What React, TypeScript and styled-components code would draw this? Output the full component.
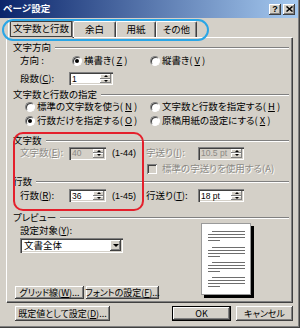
import React from "react";
import styled, { createGlobalStyle, css } from "styled-components";

const GlobalStyle = createGlobalStyle`
  html, body { margin: 0; padding: 0; background: #fff; }
  body {
    font-family: "Noto Sans CJK JP", "Noto Sans", sans-serif;
    font-size: 9.5px;
    line-height: 1;
    color: #000;
    font-feature-settings: "palt";
  }
  * { box-sizing: border-box; }
  u { text-decoration-thickness: 1px; text-underline-offset: 1px; }
`;

const Window = styled.div`
  position: relative;
  width: 300px;
  height: 328px;
  background: #d4d0c8;
  display: flex;
  flex-direction: column;
  box-shadow: inset -1px -1px #404040, inset -2px -2px #808080;
`;

const TitleBar = styled.div`
  height: 18px;
  margin-right: 2px;
  padding: 0 3px 0 3px;
  background: linear-gradient(to right, #0a246a, #a6caf0);
  display: flex;
  align-items: center;
  justify-content: space-between;
`;

const Title = styled.span`
  color: #fff;
  font-weight: bold;
  font-size: 9.5px;
  font-feature-settings: normal;
`;

const CaptionButtons = styled.div`
  display: flex;
  gap: 2px;
`;

const CaptionButton = styled.span`
  width: 12px;
  height: 11px;
  background: #d4d0c8;
  box-shadow: inset -1px -1px #404040, inset 1px 1px #fff, inset -2px -2px #808080;
  display: flex;
  align-items: center;
  justify-content: center;
  font: bold 9px "Liberation Sans", sans-serif;
`;

const TabStrip = styled.div`
  height: 19px;
  padding-left: 8px;
  display: flex;
  align-items: flex-end;
  position: relative;
  z-index: 1;
`;

const Tab = styled.div<{ $active?: boolean; $w: number }>`
  width: ${(p) => p.$w}px;
  height: 16px;
  background: #d4d0c8;
  border-top: 1px solid #fff;
  border-left: 1px solid #fff;
  border-right: 1px solid #404040;
  box-shadow: inset -1px 0 #808080;
  border-radius: 2px 2px 0 0;
  display: flex;
  align-items: center;
  justify-content: center;
  padding-top: 1px;
  ${(p) =>
    p.$active &&
    css`
      height: 19px;
      margin-bottom: -1px;
      margin-right: -1px;
      padding-top: 0;
    `}
`;

const Focus = styled.span`
  padding: 2px 2px;
  border: 1px solid #404040;
`;

const Panel = styled.div`
  position: relative;
  margin-left: 6px;
  width: 286px;
  height: 265px;
  border-top: 1px solid #fff;
  border-left: 1px solid #fff;
  box-shadow: 1px 1px #404040, inset -1px -1px #808080;
  padding: 4px 3px 0 6px;
  display: flex;
  flex-direction: column;
`;

const GroupHeader = styled.div<{ $mt: number }>`
  height: 11px;
  margin-top: ${(p) => p.$mt}px;
  display: flex;
  align-items: center;
  &::after {
    content: "";
    flex: 1;
    margin-left: 4px;
    border-top: 1px solid #808080;
    border-bottom: 1px solid #fff;
  }
`;

const Row = styled.div<{ $mt: number; $pl: number; $h?: number }>`
  height: ${(p) => p.$h ?? 12}px;
  margin-top: ${(p) => p.$mt}px;
  padding-left: ${(p) => p.$pl}px;
  display: flex;
  align-items: center;
`;

const Label = styled.span<{ $w?: number; $off?: boolean }>`
  width: ${(p) => (p.$w ? `${p.$w}px` : "auto")};
  flex: none;
  white-space: nowrap;
  ${(p) =>
    p.$off &&
    css`
      color: #8c8a85;
      text-shadow: 1px 1px #fff;
    `}
`;

const Option = styled.span<{ $w?: number }>`
  width: ${(p) => (p.$w ? `${p.$w}px` : "auto")};
  display: flex;
  align-items: center;
  gap: 2px;
  white-space: nowrap;
`;

const Radio = styled.span<{ $checked?: boolean }>`
  position: relative;
  width: 10px;
  height: 10px;
  flex: none;
  border-radius: 50%;
  background: #fff;
  border: 1px solid;
  border-color: #808080 #fff #fff #808080;
  box-shadow: inset 1px 1px #404040;
  ${(p) =>
    p.$checked &&
    css`
      &::after {
        content: "";
        position: absolute;
        left: 2px;
        top: 2px;
        width: 4px;
        height: 4px;
        border-radius: 50%;
        background: #000;
      }
    `}
`;

const Checkbox = styled.span`
  width: 10px;
  height: 10px;
  flex: none;
  background: #d4d0c8;
  box-shadow: inset 1px 1px #808080, inset -1px -1px #fff, inset 2px 2px #404040;
  margin-right: 5px;
`;

const SpinBox = styled.div<{ $w: number; $off?: boolean }>`
  width: ${(p) => p.$w}px;
  height: 13px;
  flex: none;
  padding: 2px;
  display: flex;
  align-items: center;
  background: ${(p) => (p.$off ? "#d4d0c8" : "#fff")};
  color: ${(p) => (p.$off ? "#8c8a85" : "#000")};
  box-shadow: inset 1px 1px #808080, inset 2px 2px #404040, inset -1px -1px #fff, inset -2px -2px #d4d0c8;
`;

const SpinValue = styled.span`
  flex: 1;
  padding-left: 1px;
  font: 8.5px "Liberation Sans", sans-serif;
  white-space: nowrap;
`;

const SpinButtons = styled.span`
  width: 11px;
  height: 9px;
  flex: none;
  display: flex;
  flex-direction: column;
`;

const SpinHalf = styled.span<{ $down?: boolean }>`
  flex: 1;
  background: #d4d0c8;
  box-shadow: inset -1px -1px #808080, inset 1px 1px #fff;
  display: flex;
  align-items: center;
  justify-content: center;
  &::after {
    content: "";
    border-left: 2px solid transparent;
    border-right: 2px solid transparent;
    ${(p) => (p.$down ? "border-top: 2px solid #000;" : "border-bottom: 2px solid #000;")}
  }
`;

const Range = styled.span<{ $w: number }>`
  width: ${(p) => p.$w}px;
  margin-left: 6px;
  flex: none;
  font: 9px "Liberation Sans", sans-serif;
`;

const PreviewArea = styled.div`
  flex: 1;
  display: flex;
`;

const PreviewControls = styled.div`
  flex: 1;
  display: flex;
  flex-direction: column;
  padding-left: 7px;
  padding-bottom: 3px;
`;

const TargetLabel = styled.div`
  margin-top: 3px;
  height: 10px;
`;

const Select = styled.div`
  margin-top: 2px;
  width: 103px;
  height: 15px;
  padding: 2px;
  background: #fff;
  display: flex;
  align-items: center;
  box-shadow: inset 1px 1px #808080, inset 2px 2px #404040, inset -1px -1px #fff, inset -2px -2px #d4d0c8;
`;

const SelectValue = styled.span`
  flex: 1;
  padding-left: 2px;
  font-feature-settings: normal;
`;

const DropButton = styled.span`
  width: 11px;
  height: 11px;
  background: #d4d0c8;
  box-shadow: inset -1px -1px #404040, inset 1px 1px #fff, inset -2px -2px #808080;
  display: flex;
  align-items: center;
  justify-content: center;
  &::after {
    content: "";
    border-left: 3px solid transparent;
    border-right: 3px solid transparent;
    border-top: 3px solid #000;
  }
`;

const ButtonRow = styled.div`
  margin-top: auto;
  margin-left: -5px;
  display: flex;
  gap: 2px;
`;

const Button = styled.div<{ $w: number; $h?: number; $default?: boolean }>`
  width: ${(p) => p.$w}px;
  height: ${(p) => p.$h ?? 13}px;
  flex: none;
  background: #d4d0c8;
  display: flex;
  align-items: center;
  justify-content: center;
  white-space: nowrap;
  box-shadow: inset -1px -1px #404040, inset 1px 1px #fff, inset -2px -2px #808080;
  ${(p) =>
    p.$default &&
    css`
      border: 1px solid #000;
    `}
`;

const ButtonText = styled.span`
  font-size: 9px;
`;

const PageThumb = styled.svg`
  margin-right: 35px;
  flex: none;
`;

const Footer = styled.div`
  flex: 1;
  display: flex;
  align-items: flex-start;
  padding: 4px 7px 0 15px;
  gap: 5px;
`;

const Spacer = styled.div`
  flex: 1;
`;

const TabCallout = styled.div`
  position: absolute;
  left: 2px;
  top: 19px;
  width: 207px;
  height: 22px;
  border: 2px solid #2aa6e6;
  border-radius: 11px;
  pointer-events: none;
  z-index: 5;
`;

const GridCallout = styled.div`
  position: absolute;
  left: 13px;
  top: 132px;
  width: 131px;
  height: 79px;
  border: 2px solid #e4202c;
  border-radius: 10px;
  pointer-events: none;
  z-index: 5;
`;

const Spin = ({ value, w, off }: { value: string; w: number; off?: boolean }) => (
  <SpinBox $w={w} $off={off}>
    <SpinValue>{value}</SpinValue>
    <SpinButtons>
      <SpinHalf />
      <SpinHalf $down />
    </SpinButtons>
  </SpinBox>
);

const groups = [8, 24, 39, 54];

export default function App() {
  return (
    <>
      <GlobalStyle />
      <Window>
        <TitleBar>
          <Title>ページ設定</Title>
          <CaptionButtons>
            <CaptionButton>?</CaptionButton>
            <CaptionButton>
              <svg width="7" height="6" viewBox="0 0 7 6">
                <path d="M0.5 0.5 L6.5 5.5 M6.5 0.5 L0.5 5.5" stroke="#000" strokeWidth="1.5" />
              </svg>
            </CaptionButton>
          </CaptionButtons>
        </TitleBar>

        <TabStrip>
          <Tab $active $w={66}>
            <Focus>文字数と行数</Focus>
          </Tab>
          <Tab $w={43}>余白</Tab>
          <Tab $w={40}>用紙</Tab>
          <Tab $w={41}>その他</Tab>
        </TabStrip>

        <Panel>
          <GroupHeader $mt={0}>文字方向</GroupHeader>
          <Row $mt={2} $pl={7}>
            <Label $w={52}>方向 :</Label>
            <Option $w={78}>
              <Radio $checked />
              横書き(<u>Z</u>)
            </Option>
            <Option>
              <Radio />
              縦書き(<u>V</u>)
            </Option>
          </Row>
          <Row $mt={5} $pl={7} $h={13}>
            <Label $w={49}>
              段数(<u>C</u>):
            </Label>
            <Spin value="1" w={44} />
          </Row>

          <GroupHeader $mt={4}>文字数と行数の指定</GroupHeader>
          <Row $mt={1} $pl={12}>
            <Option $w={125}>
              <Radio />
              標準の文字数を使う(<u>N</u>)
            </Option>
            <Option>
              <Radio />
              文字数と行数を指定する(<u>H</u>)
            </Option>
          </Row>
          <Row $mt={2} $pl={12}>
            <Option $w={125}>
              <Radio $checked />
              行数だけを指定する(<u>O</u>)
            </Option>
            <Option>
              <Radio />
              原稿用紙の設定にする(<u>X</u>)
            </Option>
          </Row>

          <GroupHeader $mt={8}>文字数</GroupHeader>
          <Row $mt={1} $pl={7}>
            <Label $w={49} $off>
              文字数(<u>E</u>):
            </Label>
            <Spin value="40" w={37} off />
            <Range $w={34}>(1-44)</Range>
            <Label $w={52} $off>
              字送り(<u>I</u>):
            </Label>
            <Spin value="10.5 pt" w={46} off />
          </Row>
          <Row $mt={4} $pl={134}>
            <Checkbox />
            <Label $off>標準の字送りを使用する(A)</Label>
          </Row>

          <GroupHeader $mt={1}>行数</GroupHeader>
          <Row $mt={2} $pl={7} $h={13}>
            <Label $w={49}>
              行数(<u>R</u>):
            </Label>
            <Spin value="36" w={37} />
            <Range $w={34}>(1-45)</Range>
            <Label $w={52}>
              行送り(<u>T</u>):
            </Label>
            <Spin value="18 pt" w={46} />
          </Row>

          <GroupHeader $mt={10}>プレビュー</GroupHeader>
          <PreviewArea>
            <PreviewControls>
              <TargetLabel>
                設定対象(<u>Y</u>):
              </TargetLabel>
              <Select>
                <SelectValue>文書全体</SelectValue>
                <DropButton />
              </Select>
              <ButtonRow>
                <Button $w={69}>
                  <ButtonText>
                    グリッド線(<u>W</u>)...
                  </ButtonText>
                </Button>
                <Button $w={73}>
                  <ButtonText>
                    フォントの設定(<u>F</u>)...
                  </ButtonText>
                </Button>
              </ButtonRow>
            </PreviewControls>
            <PageThumb width="53" height="75" viewBox="0 0 53 75">
              <rect x="3" y="3" width="50" height="72" fill="#000" />
              <rect x="0.5" y="0.5" width="49" height="71" fill="#fff" stroke="#9a9a9a" />
              {groups.map((g) => (
                <g key={g} stroke="#6e6e6e" strokeWidth="1">
                  <line x1="11" y1={g + 0.5} x2="44" y2={g + 0.5} />
                  <line x1="7" y1={g + 3.5} x2="44" y2={g + 3.5} />
                  <line x1="7" y1={g + 6.5} x2="44" y2={g + 6.5} />
                  <line x1="7" y1={g + 9.5} x2="19" y2={g + 9.5} />
                </g>
              ))}
            </PageThumb>
          </PreviewArea>
        </Panel>

        <Footer>
          <Button $w={95} $h={15}>
            <ButtonText>
              既定値として設定(<u>D</u>)...
            </ButtonText>
          </Button>
          <Spacer />
          <Button $w={59} $h={15} $default>
            <ButtonText>OK</ButtonText>
          </Button>
          <Button $w={57} $h={15}>
            <ButtonText>キャンセル</ButtonText>
          </Button>
        </Footer>

        <TabCallout />
        <GridCallout />
      </Window>
    </>
  );
}
